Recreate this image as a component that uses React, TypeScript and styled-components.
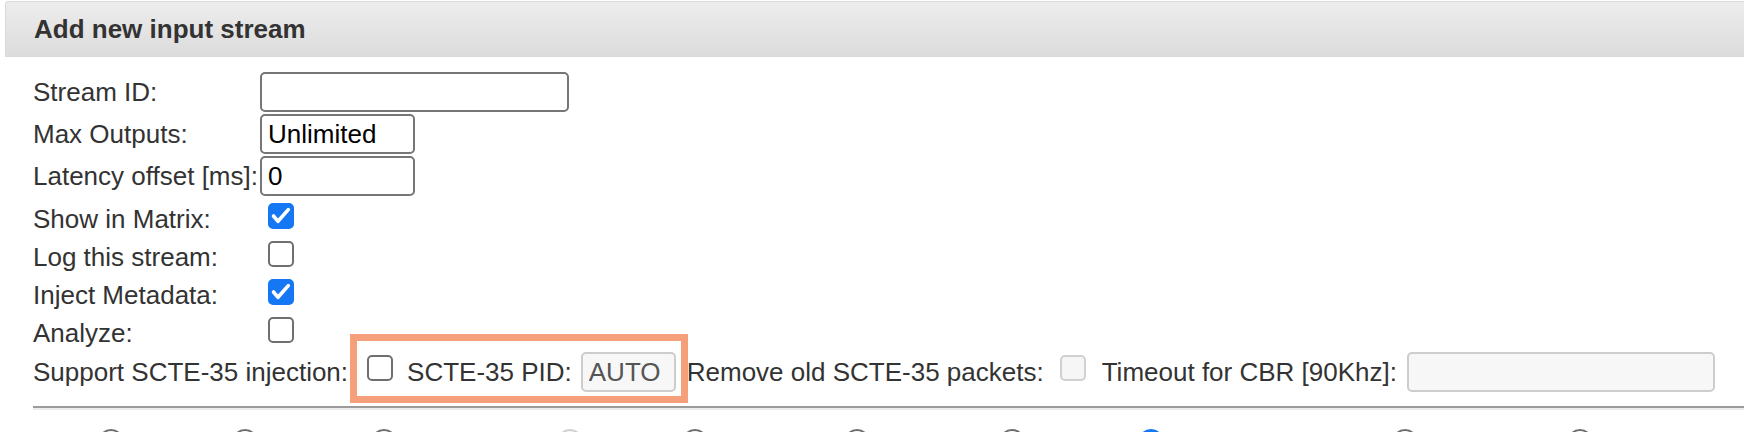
import React from "react";
import styled, { createGlobalStyle, css } from "styled-components";

const GlobalStyle = createGlobalStyle`
  html, body {
    margin: 0;
    padding: 0;
    background: #ffffff;
  }
  body {
    font-family: "Liberation Sans", Arial, Helvetica, sans-serif;
    font-size: 26px;
    color: #333333;
  }
`;

const Panel = styled.section`
  width: 1744px;
  height: 432px;
  overflow: hidden;
  display: block;
`;

const PanelHeader = styled.header`
  margin: 1px 0 0 5px;
  height: 56px;
  box-sizing: border-box;
  display: flex;
  align-items: center;
  padding-left: 28px;
  background: linear-gradient(#ededed, #dcdcdc);
  border: 1px solid #d9d9d9;
  border-right: none;
  border-top-left-radius: 4px;
`;

const Title = styled.h3`
  margin: 0;
  font-size: 26px;
  font-weight: bold;
  line-height: normal;
  color: #333333;
`;

const Form = styled.form`
  margin: 14px 0 0 0;
  padding-left: 33px;
  display: flex;
  flex-direction: column;
`;

const FieldRow = styled.div<{ $height: number; $align: "center" | "end" }>`
  display: grid;
  grid-template-columns: 227px auto;
  flex: none;
  height: ${(p) => p.$height}px;
  align-items: ${(p) => p.$align};
`;

const Label = styled.label<{ $ml?: number }>`
  line-height: normal;
  white-space: nowrap;
  color: #333333;
  margin-left: ${(p) => p.$ml ?? 0}px;
`;

const TextInput = styled.input<{ $width: number; $ml?: number }>`
  width: ${(p) => p.$width}px;
  height: 40px;
  box-sizing: border-box;
  flex: none;
  margin: 0 0 0 ${(p) => p.$ml ?? 0}px;
  padding: 0 6px;
  border: 2px solid #767676;
  border-radius: 5px;
  background: #ffffff;
  color: #000000;
  font-family: inherit;
  font-size: 26px;
  outline: none;

  &:disabled {
    background: #f7f7f7;
    border-color: #cdcdcd;
    color: #555555;
  }
`;

const CheckBox = styled.span<{
  $checked?: boolean;
  $disabled?: boolean;
  $ml?: number;
  $mb?: number;
}>`
  display: inline-flex;
  align-items: center;
  justify-content: center;
  flex: none;
  width: 26px;
  height: 26px;
  box-sizing: border-box;
  margin: 0 0 ${(p) => p.$mb ?? 0}px ${(p) => p.$ml ?? 0}px;
  border: 2px solid #6f6f6f;
  border-radius: 5px;
  background: #ffffff;
  ${(p) =>
    p.$checked &&
    css`
      background: #1677f4;
      border-color: #1677f4;
    `}
  ${(p) =>
    p.$disabled &&
    css`
      background: #f6f6f6;
      border-color: #d0d0d0;
    `}
`;

const SupportRow = styled.div`
  display: flex;
  flex: none;
  align-items: center;
  height: 46px;
`;

const Highlight = styled.span<{ $ml: number }>`
  position: relative;
  display: flex;
  align-items: center;
  align-self: stretch;
  margin-left: ${(p) => p.$ml}px;

  &::after {
    content: "";
    position: absolute;
    left: -17px;
    right: -12px;
    top: -15px;
    bottom: -8px;
    border: 7px solid #f5a07b;
    pointer-events: none;
  }
`;

const Divider = styled.hr`
  margin: 11px 0 0 33px;
  height: 0;
  border: none;
  border-top: 2px solid #9b9b9b;
  border-bottom: 2px solid #ececec;
`;

const RadioRow = styled.div`
  display: flex;
  margin-top: 19px;
  padding-left: 98px;
`;

const RadioItem = styled.label<{ $width: number }>`
  display: flex;
  align-items: flex-start;
  flex: none;
  width: ${(p) => p.$width}px;
`;

const RadioDot = styled.span<{ $state: "off" | "on" | "disabled" }>`
  width: 26px;
  height: 26px;
  box-sizing: border-box;
  border-radius: 50%;
  border: 2px solid #6f6f6f;
  background: #ffffff;
  ${(p) =>
    p.$state === "on" &&
    css`
      border: 7px solid #1677f4;
    `}
  ${(p) =>
    p.$state === "disabled" &&
    css`
      border-color: #cfcfcf;
      background: #f6f6f6;
    `}
`;

const CheckMark = () => (
  <svg width="22" height="22" viewBox="0 0 22 22" aria-hidden="true">
    <path
      d="M3.5 11 L8 16.3 L18.3 4.6"
      fill="none"
      stroke="#ffffff"
      strokeWidth="3.6"
      strokeLinecap="round"
      strokeLinejoin="round"
    />
  </svg>
);

type CheckProps = {
  checked?: boolean;
  disabled?: boolean;
  ml?: number;
  mb?: number;
  label: string;
};

const Check = ({ checked, disabled, ml, mb, label }: CheckProps) => (
  <CheckBox
    role="checkbox"
    aria-checked={!!checked}
    aria-disabled={!!disabled}
    aria-label={label}
    $checked={checked}
    $disabled={disabled}
    $ml={ml}
    $mb={mb}
  >
    {checked ? <CheckMark /> : null}
  </CheckBox>
);

const checkRows = [
  { label: "Show in Matrix:", checked: true },
  { label: "Log this stream:", checked: false },
  { label: "Inject Metadata:", checked: true },
  { label: "Analyze:", checked: false },
];

const radios: { width: number; state: "off" | "on" | "disabled" }[] = [
  { width: 134, state: "off" },
  { width: 139, state: "off" },
  { width: 186, state: "off" },
  { width: 125, state: "disabled" },
  { width: 162, state: "off" },
  { width: 155, state: "off" },
  { width: 139, state: "off" },
  { width: 254, state: "on" },
  { width: 175, state: "off" },
  { width: 120, state: "off" },
];

export default function App() {
  return (
    <>
      <GlobalStyle />
      <Panel>
        <PanelHeader>
          <Title>Add new input stream</Title>
        </PanelHeader>
        <Form onSubmit={(e) => e.preventDefault()}>
          <FieldRow $height={42} $align="center">
            <Label>Stream ID:</Label>
            <TextInput $width={309} defaultValue="" />
          </FieldRow>
          <FieldRow $height={42} $align="center">
            <Label>Max Outputs:</Label>
            <TextInput $width={155} defaultValue="Unlimited" />
          </FieldRow>
          <FieldRow $height={42} $align="center">
            <Label>Latency offset [ms]:</Label>
            <TextInput $width={155} defaultValue="0" />
          </FieldRow>
          {checkRows.map((r) => (
            <FieldRow key={r.label} $height={38} $align="end">
              <Label>{r.label}</Label>
              <Check label={r.label} checked={r.checked} ml={8} mb={6} />
            </FieldRow>
          ))}
          <SupportRow>
            <Label>Support SCTE-35 injection:</Label>
            <Highlight $ml={19}>
              <Check label="Support SCTE-35 injection" mb={8} />
              <Label $ml={14}>SCTE-35 PID:</Label>
              <TextInput $width={95} $ml={9} defaultValue="AUTO" disabled />
            </Highlight>
            <Label $ml={11}>Remove old SCTE-35 packets:</Label>
            <Check label="Remove old SCTE-35 packets" disabled ml={16} mb={8} />
            <Label $ml={16}>Timeout for CBR [90Khz]:</Label>
            <TextInput $width={308} $ml={10} defaultValue="" disabled />
          </SupportRow>
        </Form>
        <Divider />
        <RadioRow>
          {radios.map((r, i) => (
            <RadioItem key={i} $width={r.width}>
              <RadioDot $state={r.state} role="radio" aria-checked={r.state === "on"} />
            </RadioItem>
          ))}
        </RadioRow>
      </Panel>
    </>
  );
}
